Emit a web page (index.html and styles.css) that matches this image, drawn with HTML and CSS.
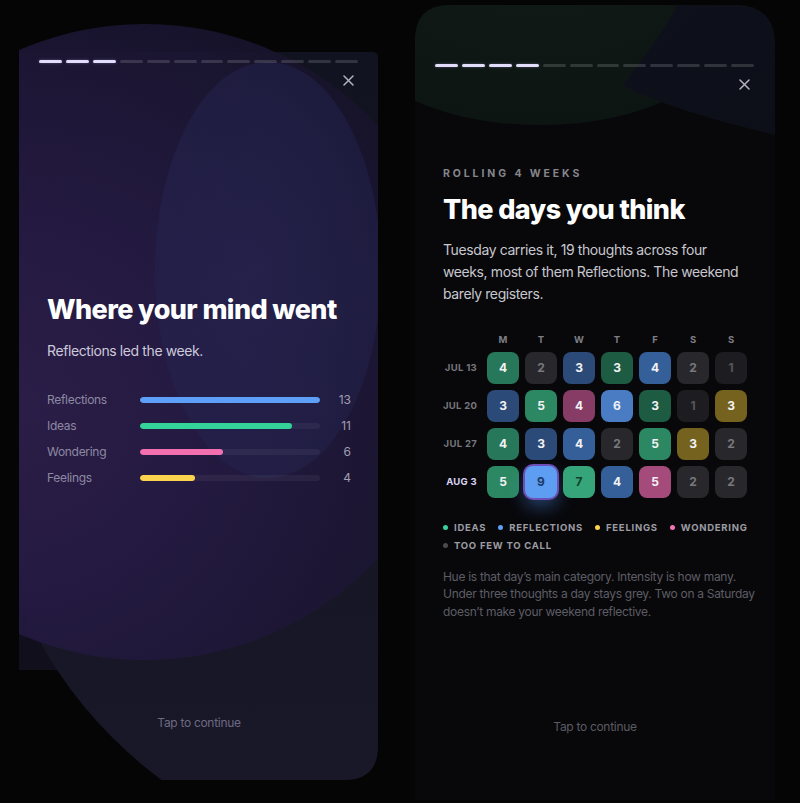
FILE: index.html
```html
<!DOCTYPE html>
<html lang="en">
<head>
<meta charset="utf-8">
<title>Weekly story</title>
<link rel="stylesheet" href="styles.css">
</head>
<body>
<div class="stage">

  <section class="card card-left">
    <svg class="bg" width="360" height="760" viewBox="0 0 360 760" aria-hidden="true">
      <defs>
        <clipPath id="lx"><rect x="0" y="-40" width="359" height="800"/></clipPath>
        <clipPath id="lc"><path d="M0,32 H353 Q359,32 359,38 V726 Q359,760 325,760 H0 Z"/></clipPath>
        <linearGradient id="lbase" x1="0" y1="0" x2="1" y2="0">
          <stop offset="0" stop-color="#120f1c"/>
          <stop offset="1" stop-color="#10121f"/>
        </linearGradient>
        <linearGradient id="lcg" x1="0" y1="0" x2="0" y2="1">
          <stop offset="0" stop-color="#10131f"/>
          <stop offset="1" stop-color="#1a1829"/>
        </linearGradient>
        <radialGradient id="lag" cx="0.3" cy="0.6" r="0.72">
          <stop offset="0" stop-color="#2d1e4b"/>
          <stop offset="0.45" stop-color="#251a43"/>
          <stop offset="0.8" stop-color="#1c1634"/>
          <stop offset="1" stop-color="#17132b"/>
        </radialGradient>
        <radialGradient id="lbg" cx="0.45" cy="0.5" r="0.6">
          <stop offset="0" stop-color="#29295a"/>
          <stop offset="1" stop-color="#22224c"/>
        </radialGradient>
      </defs>
      <path d="M0,32 H353 Q359,32 359,38 V650 H0 Z" fill="url(#lbase)"/>
      <circle cx="401" cy="410" r="435" fill="url(#lcg)" clip-path="url(#lc)"/>
      <circle cx="126" cy="322" r="318" fill="url(#lag)" clip-path="url(#lx)" opacity="0.9"/>
      <ellipse cx="249" cy="250" rx="113" ry="208" fill="url(#lbg)" clip-path="url(#lx)" opacity="0.5"/>
    </svg>
    <div class="inner">
      <div class="progress">
        <span class="seg on"></span><span class="seg on"></span><span class="seg on"></span>
        <span class="seg"></span><span class="seg"></span><span class="seg"></span>
        <span class="seg"></span><span class="seg"></span><span class="seg"></span>
        <span class="seg"></span><span class="seg"></span><span class="seg"></span>
      </div>
      <div class="close-row">
        <svg class="close" width="11" height="11" viewBox="0 0 11 11" aria-label="Close"><path d="M1 1 L10 10 M10 1 L1 10"/></svg>
      </div>
      <div class="content content-left">
        <h1 class="title">Where your mind went</h1>
        <p class="lead">Reflections led the week.</p>
        <div class="bars">
          <div class="bar-row"><span class="bar-label">Reflections</span><span class="track"><span class="fill fill-blue w13"></span></span><span class="bar-num">13</span></div>
          <div class="bar-row"><span class="bar-label">Ideas</span><span class="track"><span class="fill fill-green w11"></span></span><span class="bar-num">11</span></div>
          <div class="bar-row"><span class="bar-label">Wondering</span><span class="track"><span class="fill fill-pink w6"></span></span><span class="bar-num">6</span></div>
          <div class="bar-row"><span class="bar-label">Feelings</span><span class="track"><span class="fill fill-yellow w4"></span></span><span class="bar-num">4</span></div>
        </div>
      </div>
      <div class="tap tap-left">Tap to continue</div>
    </div>
  </section>

  <section class="card card-right">
    <svg class="bg" width="360" height="780" viewBox="0 -19 360 780" aria-hidden="true">
      <defs>
        <clipPath id="rb"><path d="M0,16 Q0,-19 35,-19 H320 Q360,-19 360,21 V776 H0 Z"/></clipPath>
        <radialGradient id="rgg" cx="0.5" cy="0.3" r="0.7">
          <stop offset="0" stop-color="#101a16"/>
          <stop offset="1" stop-color="#0d1512"/>
        </radialGradient>
        <linearGradient id="rng" x1="0" y1="0" x2="1" y2="1">
          <stop offset="0" stop-color="#0e111b"/>
          <stop offset="1" stop-color="#0c0f18"/>
        </linearGradient>
      </defs>
      <g clip-path="url(#rb)">
        <rect x="0" y="-19" width="360" height="795" fill="#08080b"/>
        <ellipse cx="125" cy="-9" rx="200" ry="110" fill="url(#rgg)"/>
        <path d="M262,-19 C248,10 222,40 208,62 C240,78 290,94 360,111 V-19 Z" fill="url(#rng)"/>
      </g>
    </svg>
    <div class="inner">
      <div class="progress">
        <span class="seg on"></span><span class="seg on"></span><span class="seg on"></span><span class="seg on"></span>
        <span class="seg"></span><span class="seg"></span><span class="seg"></span>
        <span class="seg"></span><span class="seg"></span><span class="seg"></span>
        <span class="seg"></span><span class="seg"></span>
      </div>
      <div class="close-row">
        <svg class="close" width="11" height="11" viewBox="0 0 11 11" aria-label="Close"><path d="M1 1 L10 10 M10 1 L1 10"/></svg>
      </div>
      <div class="content content-right">
        <div class="eyebrow">ROLLING 4 WEEKS</div>
        <h1 class="title title-right">The days you think</h1>
        <p class="para">Tuesday carries it, 19 thoughts across four weeks, most of them Reflections. The weekend barely registers.</p>

        <div class="heat">
          <span></span>
          <span class="dow">M</span><span class="dow">T</span><span class="dow">W</span><span class="dow">T</span><span class="dow">F</span><span class="dow">S</span><span class="dow">S</span>

          <span class="wk">JUL 13</span>
          <span class="c g-m">4</span><span class="c n2">2</span><span class="c b-d">3</span><span class="c g-d">3</span><span class="c b-m">4</span><span class="c n2">2</span><span class="c n1">1</span>

          <span class="wk">JUL 20</span>
          <span class="c b-d">3</span><span class="c g-b">5</span><span class="c p-m">4</span><span class="c b-b">6</span><span class="c g-d">3</span><span class="c n1">1</span><span class="c y-m">3</span>

          <span class="wk">JUL 27</span>
          <span class="c g-m">4</span><span class="c b-d">3</span><span class="c b-m">4</span><span class="c n2">2</span><span class="c g-b">5</span><span class="c y-m">3</span><span class="c n2">2</span>

          <span class="wk wk-now">AUG 3</span>
          <span class="c g-b">5</span><span class="c b-x today">9</span><span class="c g-x">7</span><span class="c b-m">4</span><span class="c p-b">5</span><span class="c n2">2</span><span class="c n2">2</span>
        </div>

        <ul class="legend">
          <li><i class="dot dot-green"></i>IDEAS</li>
          <li><i class="dot dot-blue"></i>REFLECTIONS</li>
          <li><i class="dot dot-yellow"></i>FEELINGS</li>
          <li><i class="dot dot-pink"></i>WONDERING</li>
          <li class="legend-last"><i class="dot dot-grey"></i>TOO FEW TO CALL</li>
        </ul>

        <p class="note">Hue is that day’s main category. Intensity is how many. Under three thoughts a day stays grey. Two on a Saturday doesn’t make your weekend reflective.</p>
      </div>
      <div class="tap tap-right">Tap to continue</div>
    </div>
  </section>

</div>
</body>
</html>
```

FILE: styles.css
```css
* { box-sizing: border-box; }

html, body {
  margin: 0;
  padding: 0;
  background: #050506;
  font-family: "Inter", "Noto Sans", sans-serif;
  color: #fff;
}

.stage {
  display: flex;
  align-items: flex-start;
  gap: 36px;
  padding-left: 19px;
  width: 800px;
  height: 803px;
  overflow: hidden;
}

.card {
  position: relative;
  width: 360px;
  height: 760px;
  flex: 0 0 360px;
}
.card-left { margin-top: 20px; }
.card-right { margin-top: 24px; }

.card-left .bg { position: absolute; left: 0; top: 0; overflow: visible; }
.card-right .bg { position: absolute; left: 0; top: -19px; overflow: visible; }

.inner {
  position: relative;
  z-index: 1;
  height: 100%;
  display: flex;
  flex-direction: column;
  padding: 40px 20px 0;
}

.progress {
  display: flex;
  gap: 4px;
  height: 2.5px;
  margin-right: 1px;
}
.seg {
  flex: 1;
  border-radius: 2px;
  background: rgba(255, 255, 255, 0.14);
}
.seg.on {
  background: #e2ddfb;
  box-shadow: 0 0 3px rgba(200, 190, 255, 0.35);
}
.card-right .seg { background: rgba(255, 255, 255, 0.15); }
.card-right .seg.on { background: #e2ddfb; }

.close-row {
  margin-top: 11px;
  height: 14px;
  display: flex;
  justify-content: flex-end;
  align-items: center;
}
.close {
  margin-right: 5px;
  fill: none;
  stroke: #b4b2be;
  stroke-width: 1.5;
  stroke-linecap: round;
}

.content { padding: 0 8px; }

.title {
  margin: 0;
  font-size: 27px;
  line-height: 34px;
  font-weight: 800;
  letter-spacing: -0.6px;
  color: #ffffff;
}

/* left story */
.content-left { margin-top: 205px; }
.lead {
  margin: 14px 0 0;
  font-size: 14px;
  line-height: 20px;
  color: #cdc9dc;
  letter-spacing: -0.4px;
}
.bars { margin-top: 26px; }
.bar-row {
  display: flex;
  align-items: center;
  height: 26px;
}
.bar-label {
  width: 93px;
  font-size: 12px;
  color: #8d89a3;
  letter-spacing: -0.3px;
}
.track {
  width: 180px;
  height: 6px;
  border-radius: 3px;
  background: rgba(255, 255, 255, 0.05);
  overflow: hidden;
  display: block;
}
.fill { display: block; height: 100%; border-radius: 3px; }
.fill-blue { background: #5ea0f7; }
.fill-green { background: #34d399; }
.fill-pink { background: #f26fb0; }
.fill-yellow { background: #fcd34d; }
.w13 { width: 100%; }
.w11 { width: 84.6%; }
.w6 { width: 46.2%; }
.w4 { width: 30.8%; }
.bar-num {
  flex: 1;
  text-align: right;
  font-size: 12px;
  color: #a19db3;
}

.tap {
  margin-top: auto;
  margin-bottom: 49px;
  text-align: center;
  font-size: 12px;
  line-height: 16px;
  letter-spacing: -0.3px;
}
.tap-left { color: #6e6a83; }
.tap-right { color: #5b5b61; }

/* right story */
.content-right { padding-right: 0; }
.eyebrow {
  margin-top: 75px;
  font-size: 10.5px;
  line-height: 14px;
  font-weight: 700;
  letter-spacing: 2.9px;
  color: #85858c;
}
.title-right { margin-top: 12px; }
.para {
  margin: 12px 0 0;
  max-width: 310px;
  font-size: 14px;
  line-height: 22px;
  color: #c7c7cd;
  letter-spacing: -0.4px;
}

.heat {
  margin-top: 29px;
  display: grid;
  grid-template-columns: 38px repeat(7, 32px);
  grid-template-rows: 12px repeat(4, 32px);
  column-gap: 6px;
  row-gap: 6px;
  align-items: center;
}
.dow {
  text-align: center;
  font-size: 9.5px;
  font-weight: 700;
  color: #7e7e85;
  line-height: 12px;
}
.wk {
  text-align: right;
  padding-right: 4px;
  font-size: 9.5px;
  font-weight: 700;
  letter-spacing: 0.3px;
  color: #76767d;
  white-space: nowrap;
}
.wk-now { color: #d9d4f4; }

.c {
  height: 32px;
  border-radius: 8px;
  display: flex;
  align-items: center;
  justify-content: center;
  font-size: 12px;
  font-weight: 700;
  color: #f2f2f4;
}
.n1 { background: #1d1d21; color: #56565c; }
.n2 { background: #28282c; color: #78787e; }
.g-d { background: #1e5b43; }
.g-m { background: #27775a; }
.g-b { background: #2c8862; }
.g-x { background: #36a67a; color: #11402d; }
.b-d { background: #2b4a77; }
.b-m { background: #355f99; }
.b-b { background: #4a7cc4; }
.b-x { background: #5d9ef2; color: #1d3a6a; }
.p-m { background: #873c66; }
.p-b { background: #a44b7c; }
.y-m { background: #75621f; }
.today {
  box-shadow: 0 0 0 2px #6e4fb8, 0 8px 18px rgba(80, 140, 240, 0.45);
}

.legend {
  list-style: none;
  margin: 21px 0 0;
  padding: 0;
  display: flex;
  flex-wrap: wrap;
  column-gap: 12px;
}
.legend li {
  display: flex;
  align-items: center;
  height: 18px;
  font-size: 9.5px;
  font-weight: 700;
  letter-spacing: 0.75px;
  color: #9c9ca3;
  white-space: nowrap;
}
.legend .legend-last { flex-basis: 100%; }
.dot {
  width: 5px;
  height: 5px;
  border-radius: 50%;
  margin-right: 6px;
  display: inline-block;
}
.dot-green { background: #34d399; }
.dot-blue { background: #5ea0f7; }
.dot-yellow { background: #fcd34d; }
.dot-pink { background: #f472b6; }
.dot-grey { background: #4a4a50; }

.note {
  margin: 13px -16px 0 0;
  max-width: 326px;
  font-size: 12px;
  line-height: 17.5px;
  color: #5d5d64;
  letter-spacing: -0.3px;
}
```
